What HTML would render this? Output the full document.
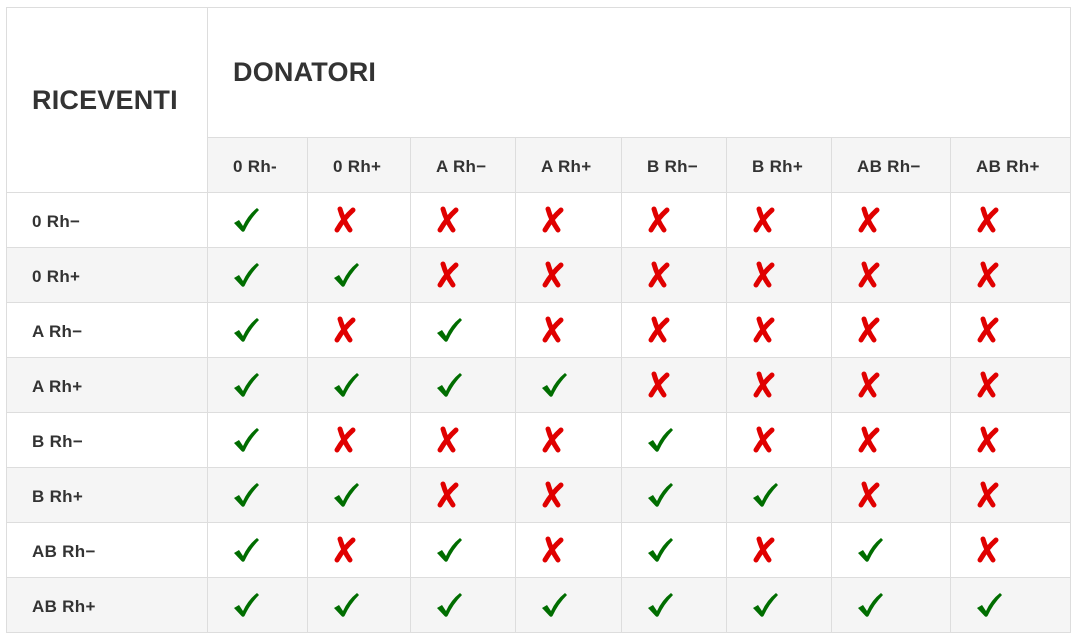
<!DOCTYPE html>
<html><head><meta charset="utf-8">
<style>
html,body{margin:0;padding:0;background:#fff;width:1082px;height:644px;overflow:hidden}
table{position:absolute;left:6px;top:7px;border-collapse:collapse;font-family:"Liberation Sans",Arial,sans-serif;color:#333;font-weight:bold;table-layout:fixed}
td,th{border:1px solid #ddd;padding:0;text-align:left;vertical-align:middle}
th{font-size:17px;letter-spacing:0.3px}
td{font-size:17px;height:54px;padding-left:0}
td.l{padding-left:25px;padding-top:3px;height:51px;letter-spacing:0.3px}
th.big{font-size:27px;padding-left:25px;letter-spacing:0.2px}
tr.s td{background:#f5f5f5}
tr.h2 th{background:#f5f5f5;height:51px;padding-top:3px;padding-left:25px}
svg.i{display:block;margin-left:25px}
</style></head><body>
<svg width="0" height="0" style="position:absolute">
<defs>
<symbol id="v" viewBox="0 0 26 26"><path d="M1 16 L6 13 L10 19 Q15 8 24 1 L26 3 Q17 12 11.5 24 Q10 25.5 8.5 24 Z" fill="#006d00"/></symbol>
<symbol id="x" viewBox="0 0 24 28"><g stroke="#e00000" stroke-width="5" stroke-linecap="round" fill="none"><path d="M7 3 Q10 14 17 24"/><path d="M20 4 Q11 12 4 24"/></g></symbol>
</defs></svg>
<table>
<colgroup><col style="width:201px"><col style="width:100px"><col style="width:103px"><col style="width:105px"><col style="width:106px"><col style="width:105px"><col style="width:105px"><col style="width:119px"><col style="width:120px"></colgroup>
<tr style="height:130px"><th class="big" rowspan="2">RICEVENTI</th><th class="big" colspan="8">DONATORI</th></tr>
<tr class="h2"><th>0 Rh-</th><th>0 Rh+</th><th>A Rh−</th><th>A Rh+</th><th>B Rh−</th><th>B Rh+</th><th>AB Rh−</th><th>AB Rh+</th></tr>
<tr><td class="l">0 Rh−</td><td><svg class="i" width="26" height="26"><use href="#v"/></svg></td><td><svg class="i" width="24" height="28"><use href="#x"/></svg></td><td><svg class="i" width="24" height="28"><use href="#x"/></svg></td><td><svg class="i" width="24" height="28"><use href="#x"/></svg></td><td><svg class="i" width="24" height="28"><use href="#x"/></svg></td><td><svg class="i" width="24" height="28"><use href="#x"/></svg></td><td><svg class="i" width="24" height="28"><use href="#x"/></svg></td><td><svg class="i" width="24" height="28"><use href="#x"/></svg></td></tr>
<tr class="s"><td class="l">0 Rh+</td><td><svg class="i" width="26" height="26"><use href="#v"/></svg></td><td><svg class="i" width="26" height="26"><use href="#v"/></svg></td><td><svg class="i" width="24" height="28"><use href="#x"/></svg></td><td><svg class="i" width="24" height="28"><use href="#x"/></svg></td><td><svg class="i" width="24" height="28"><use href="#x"/></svg></td><td><svg class="i" width="24" height="28"><use href="#x"/></svg></td><td><svg class="i" width="24" height="28"><use href="#x"/></svg></td><td><svg class="i" width="24" height="28"><use href="#x"/></svg></td></tr>
<tr><td class="l">A Rh−</td><td><svg class="i" width="26" height="26"><use href="#v"/></svg></td><td><svg class="i" width="24" height="28"><use href="#x"/></svg></td><td><svg class="i" width="26" height="26"><use href="#v"/></svg></td><td><svg class="i" width="24" height="28"><use href="#x"/></svg></td><td><svg class="i" width="24" height="28"><use href="#x"/></svg></td><td><svg class="i" width="24" height="28"><use href="#x"/></svg></td><td><svg class="i" width="24" height="28"><use href="#x"/></svg></td><td><svg class="i" width="24" height="28"><use href="#x"/></svg></td></tr>
<tr class="s"><td class="l">A Rh+</td><td><svg class="i" width="26" height="26"><use href="#v"/></svg></td><td><svg class="i" width="26" height="26"><use href="#v"/></svg></td><td><svg class="i" width="26" height="26"><use href="#v"/></svg></td><td><svg class="i" width="26" height="26"><use href="#v"/></svg></td><td><svg class="i" width="24" height="28"><use href="#x"/></svg></td><td><svg class="i" width="24" height="28"><use href="#x"/></svg></td><td><svg class="i" width="24" height="28"><use href="#x"/></svg></td><td><svg class="i" width="24" height="28"><use href="#x"/></svg></td></tr>
<tr><td class="l">B Rh−</td><td><svg class="i" width="26" height="26"><use href="#v"/></svg></td><td><svg class="i" width="24" height="28"><use href="#x"/></svg></td><td><svg class="i" width="24" height="28"><use href="#x"/></svg></td><td><svg class="i" width="24" height="28"><use href="#x"/></svg></td><td><svg class="i" width="26" height="26"><use href="#v"/></svg></td><td><svg class="i" width="24" height="28"><use href="#x"/></svg></td><td><svg class="i" width="24" height="28"><use href="#x"/></svg></td><td><svg class="i" width="24" height="28"><use href="#x"/></svg></td></tr>
<tr class="s"><td class="l">B Rh+</td><td><svg class="i" width="26" height="26"><use href="#v"/></svg></td><td><svg class="i" width="26" height="26"><use href="#v"/></svg></td><td><svg class="i" width="24" height="28"><use href="#x"/></svg></td><td><svg class="i" width="24" height="28"><use href="#x"/></svg></td><td><svg class="i" width="26" height="26"><use href="#v"/></svg></td><td><svg class="i" width="26" height="26"><use href="#v"/></svg></td><td><svg class="i" width="24" height="28"><use href="#x"/></svg></td><td><svg class="i" width="24" height="28"><use href="#x"/></svg></td></tr>
<tr><td class="l">AB Rh−</td><td><svg class="i" width="26" height="26"><use href="#v"/></svg></td><td><svg class="i" width="24" height="28"><use href="#x"/></svg></td><td><svg class="i" width="26" height="26"><use href="#v"/></svg></td><td><svg class="i" width="24" height="28"><use href="#x"/></svg></td><td><svg class="i" width="26" height="26"><use href="#v"/></svg></td><td><svg class="i" width="24" height="28"><use href="#x"/></svg></td><td><svg class="i" width="26" height="26"><use href="#v"/></svg></td><td><svg class="i" width="24" height="28"><use href="#x"/></svg></td></tr>
<tr class="s"><td class="l">AB Rh+</td><td><svg class="i" width="26" height="26"><use href="#v"/></svg></td><td><svg class="i" width="26" height="26"><use href="#v"/></svg></td><td><svg class="i" width="26" height="26"><use href="#v"/></svg></td><td><svg class="i" width="26" height="26"><use href="#v"/></svg></td><td><svg class="i" width="26" height="26"><use href="#v"/></svg></td><td><svg class="i" width="26" height="26"><use href="#v"/></svg></td><td><svg class="i" width="26" height="26"><use href="#v"/></svg></td><td><svg class="i" width="26" height="26"><use href="#v"/></svg></td></tr>
</table>
</body></html>
